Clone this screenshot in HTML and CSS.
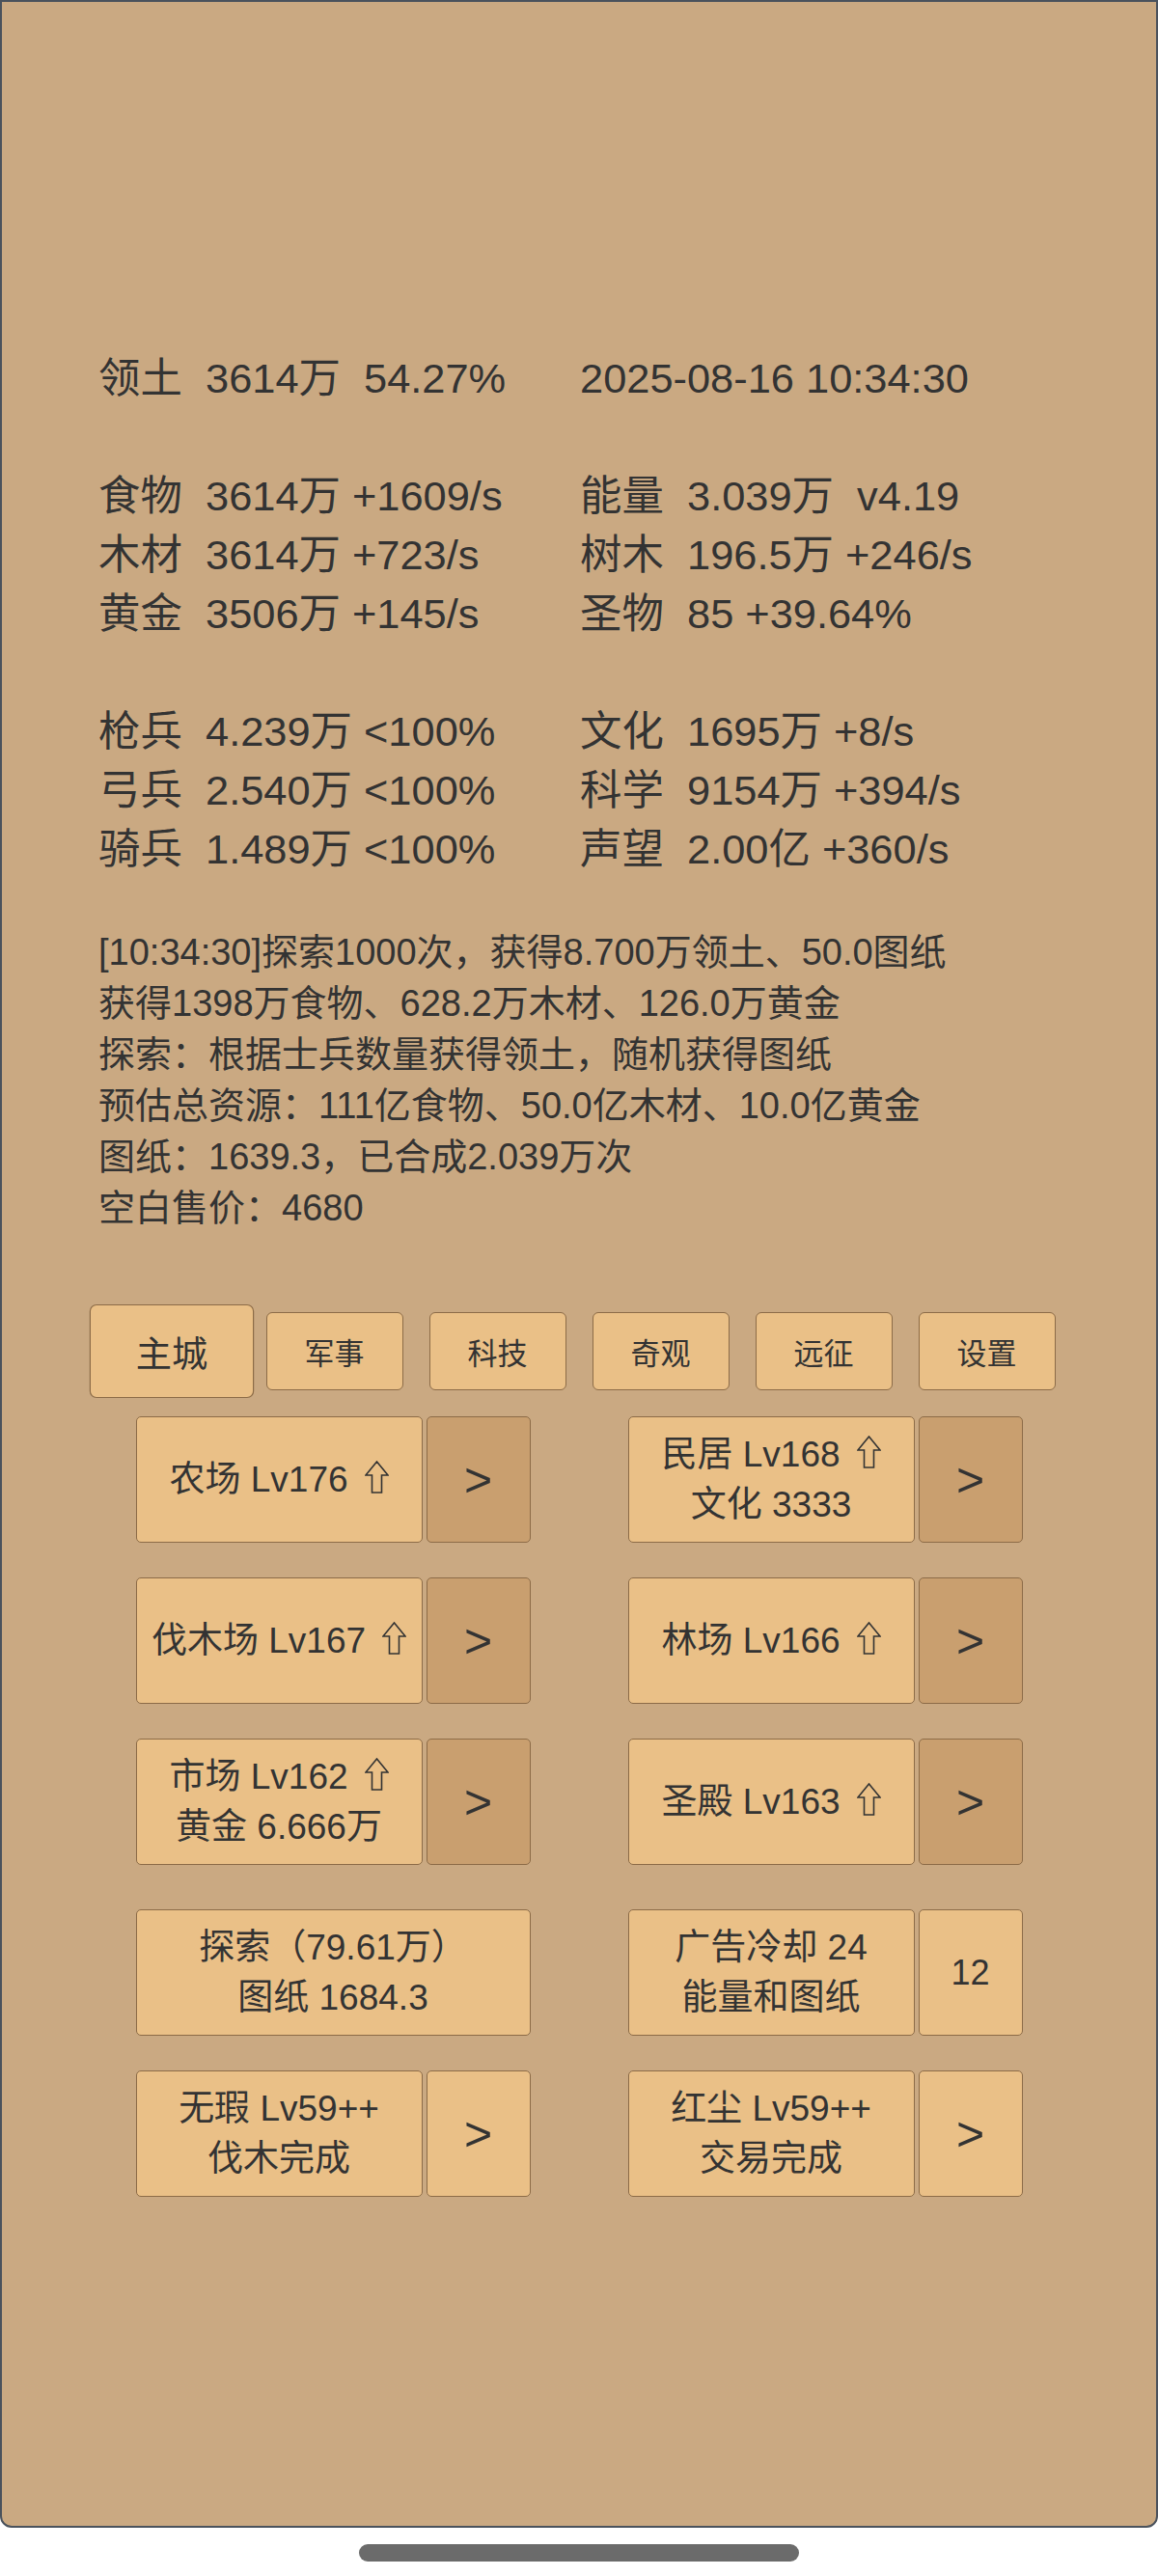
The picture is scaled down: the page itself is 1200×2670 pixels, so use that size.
FILE: index.html
```html
<!DOCTYPE html>
<html lang="zh-CN">
<head>
<meta charset="utf-8">
<title>领土</title>
<link rel="stylesheet" href="styles.css">
</head>
<body>
<div class="screen">
  <div class="info">
    <div class="stats-group">
      <div class="stat"><span class="label">领土</span><span class="val">3614万  54.27%</span></div>
      <div class="stat"><span class="val">2025-08-16 10:34:30</span></div>
    </div>
    <div class="stats-group">
      <div class="stat"><span class="label">食物</span><span class="val">3614万 +1609/s</span></div>
      <div class="stat"><span class="label">能量</span><span class="val">3.039万  v4.19</span></div>
      <div class="stat"><span class="label">木材</span><span class="val">3614万 +723/s</span></div>
      <div class="stat"><span class="label">树木</span><span class="val">196.5万 +246/s</span></div>
      <div class="stat"><span class="label">黄金</span><span class="val">3506万 +145/s</span></div>
      <div class="stat"><span class="label">圣物</span><span class="val">85 +39.64%</span></div>
    </div>
    <div class="stats-group last">
      <div class="stat"><span class="label">枪兵</span><span class="val">4.239万 &lt;100%</span></div>
      <div class="stat"><span class="label">文化</span><span class="val">1695万 +8/s</span></div>
      <div class="stat"><span class="label">弓兵</span><span class="val">2.540万 &lt;100%</span></div>
      <div class="stat"><span class="label">科学</span><span class="val">9154万 +394/s</span></div>
      <div class="stat"><span class="label">骑兵</span><span class="val">1.489万 &lt;100%</span></div>
      <div class="stat"><span class="label">声望</span><span class="val">2.00亿 +360/s</span></div>
    </div>
    <div class="log">
      <div>[10:34:30]探索1000次，获得8.700万领土、50.0图纸</div>
      <div>获得1398万食物、628.2万木材、126.0万黄金</div>
      <div>探索：根据士兵数量获得领土，随机获得图纸</div>
      <div>预估总资源：111亿食物、50.0亿木材、10.0亿黄金</div>
      <div>图纸：1639.3，已合成2.039万次</div>
      <div>空白售价：4680</div>
    </div>
  </div>

  <div class="tabs">
    <div class="tab active">主城</div>
    <div class="tab">军事</div>
    <div class="tab">科技</div>
    <div class="tab">奇观</div>
    <div class="tab">远征</div>
    <div class="tab">设置</div>
  </div>

  <div class="buildings">
    <div class="group">
      <div class="btn main"><span>农场 Lv176<svg class="up" viewBox="0 0 25 34" aria-hidden="true"><path d="M12.5 1 L24 15 L17.5 15 L17.5 33 L7.5 33 L7.5 15 L1 15 Z"/></svg></span></div>
      <div class="btn arrow">&gt;</div>
    </div>
    <div class="group">
      <div class="btn main"><span>民居 Lv168<svg class="up" viewBox="0 0 25 34" aria-hidden="true"><path d="M12.5 1 L24 15 L17.5 15 L17.5 33 L7.5 33 L7.5 15 L1 15 Z"/></svg></span><span>文化 3333</span></div>
      <div class="btn arrow">&gt;</div>
    </div>

    <div class="group">
      <div class="btn main"><span>伐木场 Lv167<svg class="up" viewBox="0 0 25 34" aria-hidden="true"><path d="M12.5 1 L24 15 L17.5 15 L17.5 33 L7.5 33 L7.5 15 L1 15 Z"/></svg></span></div>
      <div class="btn arrow">&gt;</div>
    </div>
    <div class="group">
      <div class="btn main"><span>林场 Lv166<svg class="up" viewBox="0 0 25 34" aria-hidden="true"><path d="M12.5 1 L24 15 L17.5 15 L17.5 33 L7.5 33 L7.5 15 L1 15 Z"/></svg></span></div>
      <div class="btn arrow">&gt;</div>
    </div>

    <div class="group">
      <div class="btn main"><span>市场 Lv162<svg class="up" viewBox="0 0 25 34" aria-hidden="true"><path d="M12.5 1 L24 15 L17.5 15 L17.5 33 L7.5 33 L7.5 15 L1 15 Z"/></svg></span><span>黄金 6.666万</span></div>
      <div class="btn arrow">&gt;</div>
    </div>
    <div class="group">
      <div class="btn main"><span>圣殿 Lv163<svg class="up" viewBox="0 0 25 34" aria-hidden="true"><path d="M12.5 1 L24 15 L17.5 15 L17.5 33 L7.5 33 L7.5 15 L1 15 Z"/></svg></span></div>
      <div class="btn arrow">&gt;</div>
    </div>

    <div class="group spaced">
      <div class="btn wide"><span>探索（79.61万）</span><span>图纸 1684.3</span></div>
    </div>
    <div class="group spaced">
      <div class="btn main"><span>广告冷却 24</span><span>能量和图纸</span></div>
      <div class="btn count">12</div>
    </div>

    <div class="group">
      <div class="btn main"><span>无瑕 Lv59++</span><span>伐木完成</span></div>
      <div class="btn arrow light">&gt;</div>
    </div>
    <div class="group">
      <div class="btn main"><span>红尘 Lv59++</span><span>交易完成</span></div>
      <div class="btn arrow light">&gt;</div>
    </div>
  </div>
</div>
<div class="home">
  <div class="pill"></div>
</div>
</body>
</html>
```

FILE: styles.css
```css
* {
  box-sizing: border-box;
}

html, body {
  margin: 0;
  padding: 0;
  background: #ffffff;
}

body {
  font-family: "Liberation Sans", "Noto Sans CJK SC", sans-serif;
  color: #333333;
}

.screen {
  height: 2620px;
  border: 2px solid #4a525c;
  border-radius: 0 0 12px 12px;
  background: #caa982;
  padding-top: 360px;
}

.info {
  padding-left: 100px;
}

.stats-group {
  display: grid;
  grid-template-columns: 499px 1fr;
  font-size: 43.4px;
  line-height: 61px;
  margin-bottom: 61px;
}

.stats-group.last {
  margin-bottom: 0;
}

.stat {
  white-space: pre;
}

.stat .label {
  display: inline-block;
  width: 111px;
}

.log {
  margin-top: 50px;
  font-size: 38px;
  line-height: 53px;
}

.tabs {
  display: flex;
  justify-content: center;
  gap: 27px;
  margin-top: 81px;
}

.tab {
  width: 142px;
  height: 81px;
  display: flex;
  align-items: center;
  justify-content: center;
  background: #eac087;
  border: 1px solid #8c6b47;
  border-radius: 6px;
  font-size: 31px;
}

.tab.active {
  transform: scale(1.2);
}

.buildings {
  display: grid;
  grid-template-columns: 510px 510px;
  justify-content: center;
  row-gap: 36px;
  margin-top: 27px;
}

.group {
  justify-self: center;
  display: flex;
  gap: 4px;
  height: 131px;
}

.group.spaced {
  margin-top: 10px;
}

.btn {
  display: flex;
  flex-direction: column;
  align-items: center;
  justify-content: center;
  background: #eac087;
  border: 1px solid #8c6b47;
  border-radius: 5px;
  font-size: 37px;
  line-height: 52px;
  text-align: center;
  white-space: nowrap;
}

.btn.main {
  width: 297px;
}

.btn.wide {
  width: 409px;
}

.btn.arrow {
  width: 108px;
  background: #c99f6f;
  font-size: 50px;
}

.btn.arrow.light {
  background: #eac087;
}

.btn.count {
  width: 108px;
  font-size: 36px;
}

.up {
  width: 25px;
  height: 34px;
  margin-left: 17px;
  vertical-align: -2px;
  fill: none;
  stroke: #333333;
  stroke-width: 1.6;
  stroke-linejoin: miter;
}

.home {
  height: 50px;
  display: flex;
  justify-content: center;
  padding-top: 17px;
}

.pill {
  width: 456px;
  height: 18px;
  border-radius: 9px;
  background: #6b6b6b;
}
```
